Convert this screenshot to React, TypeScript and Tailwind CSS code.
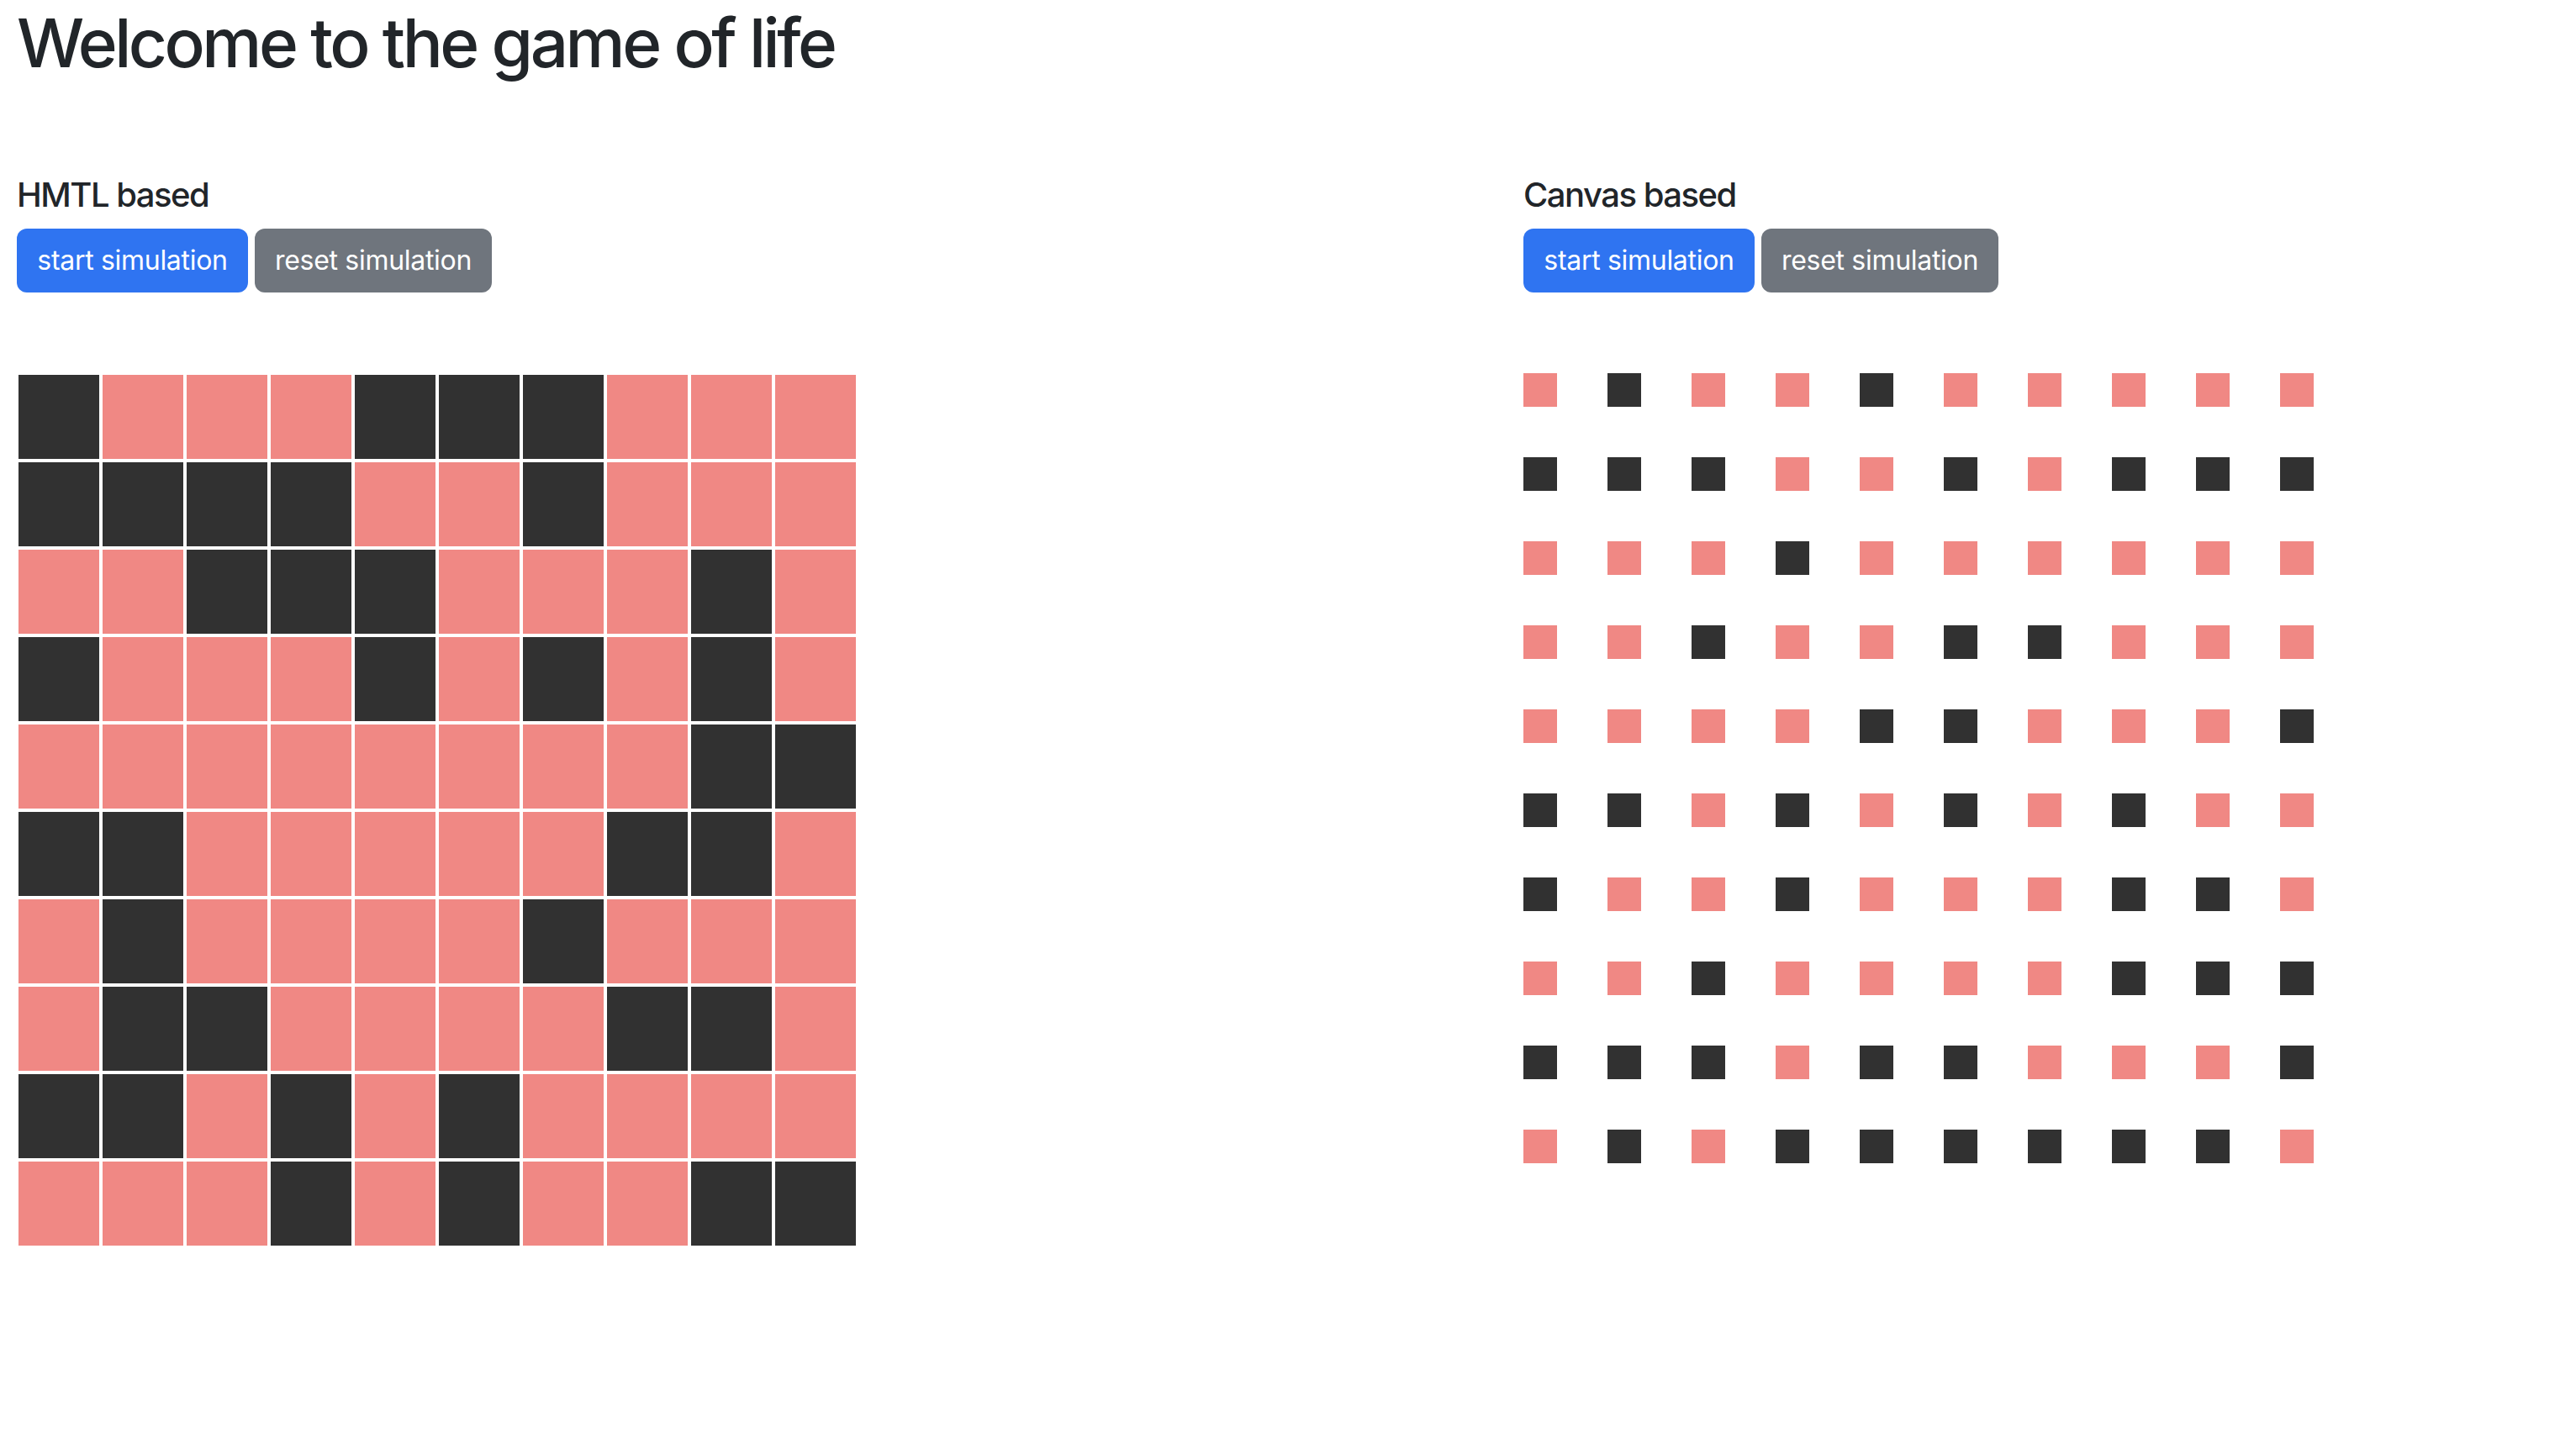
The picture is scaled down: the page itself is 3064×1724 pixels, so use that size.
const D = 1;
const P = 0;

const htmlCells = [
  [D, P, P, P, D, D, D, P, P, P],
  [D, D, D, D, P, P, D, P, P, P],
  [P, P, D, D, D, P, P, P, D, P],
  [D, P, P, P, D, P, D, P, D, P],
  [P, P, P, P, P, P, P, P, D, D],
  [D, D, P, P, P, P, P, D, D, P],
  [P, D, P, P, P, P, D, P, P, P],
  [P, D, D, P, P, P, P, D, D, P],
  [D, D, P, D, P, D, P, P, P, P],
  [P, P, P, D, P, D, P, P, D, D],
];

const canvasCells = [
  [P, D, P, P, D, P, P, P, P, P],
  [D, D, D, P, P, D, P, D, D, D],
  [P, P, P, D, P, P, P, P, P, P],
  [P, P, D, P, P, D, D, P, P, P],
  [P, P, P, P, D, D, P, P, P, D],
  [D, D, P, D, P, D, P, D, P, P],
  [D, P, P, D, P, P, P, D, D, P],
  [P, P, D, P, P, P, P, D, D, D],
  [D, D, D, P, D, D, P, P, P, D],
  [P, D, P, D, D, D, D, D, D, P],
];

const font = "font-['Inter','Liberation_Sans',sans-serif]";

function Controls({ title }: { title: string }) {
  return (
    <div className="flex flex-col">
      <h5 className="mt-[109px] mb-[16px] text-[40px] leading-[48px] font-medium tracking-[-1.5px] text-[#212529]">
        {title}
      </h5>
      <div className="flex gap-[8px]">
        <button
          type="button"
          className="h-[76px] w-[275px] rounded-[12px] bg-[#2f74f1] text-[32px] text-white tracking-[-0.3px]"
        >
          start simulation
        </button>
        <button
          type="button"
          className="h-[76px] w-[282px] rounded-[12px] bg-[#6f757d] text-[32px] text-white tracking-[-0.3px]"
        >
          reset simulation
        </button>
      </div>
    </div>
  );
}

export default function App() {
  return (
    <div className={`min-h-screen w-full bg-white pl-[20px] pt-[3px] ${font}`}>
      <h1 className="text-[80px] leading-[96px] font-medium tracking-[-3.5px] text-[#212529]">
        Welcome to the game of life
      </h1>

      <div className="flex">
        {/* HTML based */}
        <div className="flex w-[1792px] flex-col">
          <Controls title="HMTL based" />
          <div className="mt-[98px] ml-[2px] flex flex-col gap-[4px]">
            {htmlCells.map((row, r) => (
              <div key={r} className="flex gap-[4px]">
                {row.map((c, i) => (
                  <div
                    key={i}
                    className={
                      c === D
                        ? "h-[100px] w-[96px] bg-[#313131]"
                        : "h-[100px] w-[96px] bg-[#f08884]"
                    }
                  />
                ))}
              </div>
            ))}
          </div>
        </div>

        {/* Canvas based */}
        <div className="flex flex-col">
          <Controls title="Canvas based" />
          <div className="mt-[96px] flex flex-col gap-[60px]">
            {canvasCells.map((row, r) => (
              <div key={r} className="flex gap-[60px]">
                {row.map((c, i) => (
                  <div
                    key={i}
                    className={
                      c === D
                        ? "h-[40px] w-[40px] bg-[#313131]"
                        : "h-[40px] w-[40px] bg-[#f08884]"
                    }
                  />
                ))}
              </div>
            ))}
          </div>
        </div>
      </div>
    </div>
  );
}
